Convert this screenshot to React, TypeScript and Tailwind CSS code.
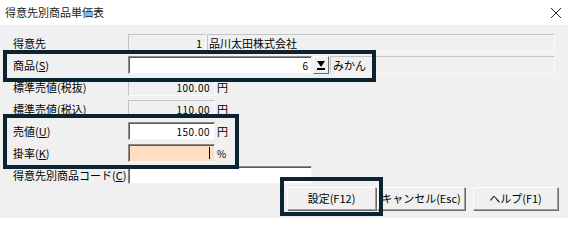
import { ReactNode } from "react";

const FONT = { fontFamily: '"Noto Sans CJK JP", "Noto Sans", sans-serif' };

function Label({ children }: { children: ReactNode }) {
  return <div className="w-[115px] shrink-0 text-[11px] leading-none text-black">{children}</div>;
}

function Key({ k }: { k: string }) {
  return (
    <>
      (<span className="underline underline-offset-1">{k}</span>)
    </>
  );
}

// read-only gray box
function ReadBox({ className, children }: { className: string; children?: ReactNode }) {
  return (
    <div
      className={`h-[18px] flex items-center border border-t-[#c4c4c4] border-l-[#c4c4c4] border-b-[#fafafa] border-r-[#fafafa] bg-[#f0f0f0] text-[11px] text-black ${className}`}
    >
      {children}
    </div>
  );
}

// editable sunken box
function EditBox({ className, children }: { className: string; children?: ReactNode }) {
  return (
    <div
      className={`h-[18px] flex items-center border border-t-[#8a8a8a] border-l-[#8a8a8a] border-b-[#f4f4f4] border-r-[#f4f4f4] shadow-[inset_1px_1px_0_#5a5a5a] text-[11px] text-black ${className}`}
    >
      {children}
    </div>
  );
}

function Btn({ className, children }: { className: string; children: ReactNode }) {
  return (
    <div
      className={`h-[23px] flex items-center justify-center border border-t-white border-l-white border-b-[#a0a0a0] border-r-[#a0a0a0] shadow-[1px_1px_0_#696969] bg-[#f0f0f0] text-[11px] text-black ${className}`}
    >
      {children}
    </div>
  );
}

export default function App() {
  return (
    <div className="w-[572px] h-[218px] bg-white flex flex-col relative overflow-hidden" style={FONT}>
      {/* Title bar */}
      <div className="h-[25px] flex items-center justify-between pl-[5px] pr-[10px]">
        <span className="text-[11px] text-[#1a1a1a]">得意先別商品単価表</span>
        <svg width="12" height="12" viewBox="0 0 12 12" className="mt-[1px]">
          <path d="M1 1 L11 11 M11 1 L1 11" stroke="#222" strokeWidth="1" fill="none" />
        </svg>
      </div>

      {/* Body */}
      <div className="flex-1 w-[568px] bg-[#f0f0f0] pt-[9px] pl-[13px] flex flex-col gap-[4px]">
        <div className="flex items-center h-[18px]">
          <Label>得意先</Label>
          <ReadBox className="w-[78px] justify-end pr-[3px]">1</ReadBox>
          <ReadBox className="ml-[1px] w-[348px] pl-[1px]">品川太田株式会社</ReadBox>
        </div>

        <div className="flex items-center h-[18px]">
          <Label>
            商品<Key k="S" />
          </Label>
          <EditBox className="w-[184px] bg-white justify-end pr-[3px]">
            <span className="text-[10px]">6</span>
          </EditBox>
          <div className="ml-[1px] w-[16px] h-[18px] flex items-center justify-center border border-t-white border-l-white border-b-[#696969] border-r-[#696969] bg-[#f0f0f0]">
            <svg width="10" height="11" viewBox="0 0 10 11">
              <path d="M1 1 H9 L5 7 Z" fill="#000" />
              <rect x="1" y="8" width="8" height="2" fill="#000" />
            </svg>
          </div>
          <ReadBox className="ml-[1px] w-[225px] pl-[2px]">みかん</ReadBox>
        </div>

        <div className="flex items-center h-[18px]">
          <Label>標準売値(税抜)</Label>
          <ReadBox className="w-[87px] justify-end pr-[4px]">
            <span className="text-[10px] tracking-[0.5px]">100.00</span>
          </ReadBox>
          <span className="ml-[2px] text-[11px]">円</span>
        </div>

        <div className="flex items-center h-[18px]">
          <Label>標準売値(税込)</Label>
          <ReadBox className="w-[87px] justify-end pr-[4px]">
            <span className="text-[10px] tracking-[0.5px]">110.00</span>
          </ReadBox>
          <span className="ml-[2px] text-[11px]">円</span>
        </div>

        <div className="flex items-center h-[18px]">
          <Label>
            売値<Key k="U" />
          </Label>
          <EditBox className="w-[87px] bg-white justify-end pr-[4px]">
            <span className="text-[10px] tracking-[0.5px]">150.00</span>
          </EditBox>
          <span className="ml-[2px] text-[11px]">円</span>
        </div>

        <div className="flex items-center h-[18px]">
          <Label>
            掛率<Key k="K" />
          </Label>
          <EditBox className="w-[87px] bg-[#ffdfbf] justify-end pr-[4px]">
            <span className="w-[1px] h-[12px] bg-black" />
          </EditBox>
          <span className="ml-[2px] text-[10px]">%</span>
        </div>

        <div className="flex items-center h-[18px]">
          <Label>
            得意先別商品コード<Key k="C" />
          </Label>
          <EditBox className="w-[184px] bg-white" />
        </div>

        <div className="flex items-center mt-[-1px]">
          <Btn className="ml-[274px] w-[89px]">設定(F12)</Btn>
          <Btn className="ml-[1px] w-[88px]">キャンセル(Esc)</Btn>
          <Btn className="ml-[8px] w-[85px]">ヘルプ(F1)</Btn>
        </div>
      </div>

      {/* annotation frames */}
      <div className="absolute left-[3px] top-[50px] w-[373px] h-[32px] border-4 border-[#0c2331]" />
      <div className="absolute left-[3px] top-[114px] w-[236px] h-[55px] border-4 border-[#0c2331]" />
      <div className="absolute left-[280px] top-[177px] w-[103px] h-[39px] border-4 border-[#0c2331]" />
    </div>
  );
}
